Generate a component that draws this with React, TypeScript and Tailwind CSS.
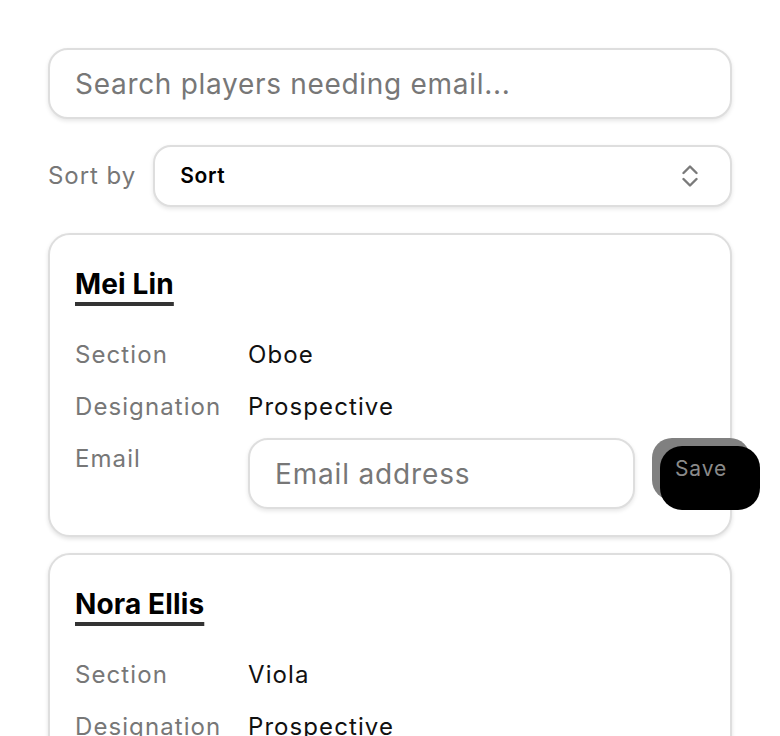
import React from 'react';

const font = { fontFamily: 'Inter, "Noto Sans", sans-serif' };

type Player = { name: string; section: string; designation: string };

const players: Player[] = [
  { name: 'Mei Lin', section: 'Oboe', designation: 'Prospective' },
  { name: 'Nora Ellis', section: 'Viola', designation: 'Prospective' },
];

const SortIcon = () => (
  <svg width="16" height="22" viewBox="0 0 16 22" fill="none" stroke="#7a7a7a" strokeWidth="2.4" strokeLinecap="round" strokeLinejoin="round">
    <polyline points="1.5,8 8,1.5 14.5,8" />
    <polyline points="1.5,14 8,20.5 14.5,14" />
  </svg>
);

const PlayerCard: React.FC<{ player: Player }> = ({ player }) => (
  <div className="rounded-[22px] border-2 border-[#dedede] bg-white px-[25px] pt-[31px] pb-[26px] shadow-[0_2px_4px_rgba(0,0,0,0.12)]">
    <h2 className="text-[28px] leading-[36px] font-bold tracking-[0.005em] text-black">
      <span className="underline decoration-4 decoration-[#333] underline-offset-[8px]">{player.name}</span>
    </h2>
    <div className="mt-[35px] flex flex-col text-[24px] leading-[36px] tracking-[0.045em]">
      <div className="flex">
        <span className="w-[173px] shrink-0 text-[#777]">Section</span>
        <span className="text-[#111]">{player.section}</span>
      </div>
      <div className="mt-4 flex">
        <span className="w-[173px] shrink-0 text-[#777]">Designation</span>
        <span className="text-[#111]">{player.designation}</span>
      </div>
      <div className="mt-[13px] flex items-start">
        <span className="w-[173px] shrink-0 pt-[3px] text-[#777]">Email</span>
        <input
          type="email"
          placeholder="Email address"
          className="h-[71px] w-[387px] shrink-0 rounded-[20px] border-2 border-[#dedede] bg-white px-[25px] text-[28px] tracking-[0.03em] text-black shadow-[0_2px_4px_rgba(0,0,0,0.1)] outline-none placeholder:text-[#777]"
          style={font}
        />
        <div className="relative ml-[17px] h-[62px] w-[98px] shrink-0">
          <div className="absolute inset-0 rounded-[20px] bg-[#808080]" />
          <div className="absolute left-[8px] top-[8px] h-[64px] w-[100px] rounded-[22px] bg-black" />
          <button className="relative flex h-full w-full items-center justify-center text-[21px] tracking-[0.04em] text-[#8a8a8a]" style={font}>
            Save
          </button>
        </div>
      </div>
    </div>
  </div>
);

export default function App() {
  return (
    <div className="min-h-screen bg-white px-12 pt-12" style={font}>
      <input
        type="text"
        placeholder="Search players needing email..."
        className="block h-[71px] w-full rounded-[20px] border-2 border-[#dedede] bg-white px-[25px] text-[28px] tracking-[0.025em] text-black shadow-[0_2px_4px_rgba(0,0,0,0.1)] outline-none placeholder:text-[#777]"
        style={font}
      />
      <div className="mt-[26px] flex items-center gap-[17px]">
        <span className="text-[24px] tracking-[0.04em] text-[#777]">Sort by</span>
        <div className="flex h-[62px] flex-1 items-center justify-between rounded-[18px] border-2 border-[#dedede] bg-white pl-[25px] pr-[32px] shadow-[0_2px_4px_rgba(0,0,0,0.1)]">
          <span className="text-[21px] font-semibold tracking-[0.03em] text-black">Sort</span>
          <SortIcon />
        </div>
      </div>
      <div className="mt-[26px] flex flex-col gap-[16px]">
        {players.map((p) => (
          <PlayerCard key={p.name} player={p} />
        ))}
      </div>
    </div>
  );
}
